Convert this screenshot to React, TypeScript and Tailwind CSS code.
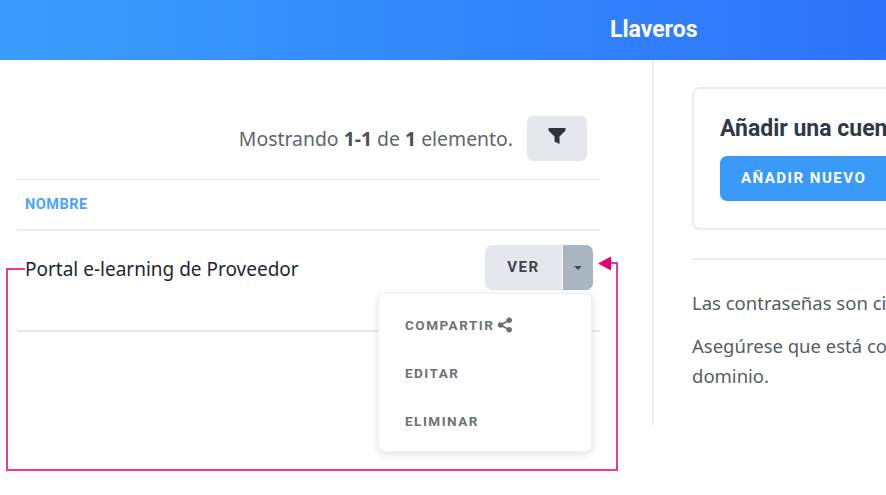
import React from 'react';

const body = "font-['Noto_Sans',sans-serif]";
const head = "font-['Roboto',sans-serif]";

function ShareIcon() {
  return (
    <svg className="w-[16px] h-[16px] text-[#6b7076]" viewBox="0 0 16 16" fill="currentColor">
      <circle cx="3.600" cy="8" r="2.800" />
      <circle cx="12.200" cy="3.200" r="2.700" />
      <circle cx="12.200" cy="12.800" r="2.700" />
      <path d="M3.600 8 12.200 3.200M3.600 8l8.600 4.800" stroke="currentColor" strokeWidth="1.600" fill="none" />
    </svg>
  );
}

function Arrows() {
  return (
    <svg className="absolute left-0 top-0 pointer-events-none" width="886" height="495" fill="none">
      <path d="M25 269H7V470H617V263H606" stroke="#e83e8c" strokeWidth="2" />
      <path d="M598 263.500 611 256.500V270.500Z" fill="#e6006e" />
    </svg>
  );
}

const menuItem = `${head} font-bold text-[13.500px] tracking-[1.500px] text-[#6c7278] uppercase`;

export default function App() {
  return (
    <div className={`${body} relative w-[886px] h-[495px] overflow-hidden bg-white`}>
      <header className="h-[60px] flex items-center pl-[610px] bg-gradient-to-r from-[#3b9dfb] to-[#2f72fb]">
        <h1 className={`${head} text-white font-bold text-[23px]`}>Llaveros</h1>
      </header>

      <div className="flex items-start">
        <section className="w-[654px] h-[365px] shrink-0 border-r-2 border-[#eceff2] pl-[17px] pr-[52px]">
          <div className="h-[120px] flex items-end justify-end pr-[13px] pb-[18px] border-b border-[#e4e8ec]">
            <span className="text-[19.400px] text-[#5f666d] mr-[14px] mb-[10px] leading-[24px] whitespace-nowrap">
              Mostrando <b className="font-bold text-[#4b5258]">1-1</b> de <b className="font-bold text-[#4b5258]">1</b> elemento.
            </span>
            <button className="w-[60px] h-[45px] rounded-[6px] bg-[#e4e8ec] flex items-center justify-center">
              <svg className="w-[18px] h-[18px] mb-[6px]" viewBox="0 0 18 18" fill="#2f3338">
                <path d="M0.500 1h17v2.500l-6 6v7.500l-5-2.500v-5l-6-6z" />
              </svg>
            </button>
          </div>

          <div className="h-[51px] flex items-center pl-[8px] border-b-2 border-[#e8ecf0]">
            <span className={`${head} font-bold text-[14.500px] tracking-[0.500px] text-[#4da3ff]`}>NOMBRE</span>
          </div>

          <div className="h-[101px] pl-[8px] pr-[7px] pt-[14px] flex justify-between items-start border-b-2 border-[#e4e8ec]">
            <span className="text-[19px] leading-[48px] text-[#1d2730]">Portal e-learning de Proveedor</span>
            <div className="flex h-[45px]">
              <button className={`${head} w-[77px] bg-[#e4e8ec] rounded-l-[7px] font-bold text-[15px] tracking-[1.500px] text-[#40464c]`}>VER</button>
              <button className="w-[30px] ml-[1px] bg-[#a9b5bf] rounded-r-[7px] flex items-center justify-center">
                <span className="w-0 h-0 border-x-[4px] border-x-transparent border-t-[4px] border-t-[#3f464d]" />
              </button>
            </div>
          </div>
        </section>

        <aside className="pl-[38px] pt-[27px] flex-1 min-w-0">
          <div className="w-[300px] h-[143px] border-2 border-[#e8ecf0] rounded-[8px] pl-[26px] pt-[26px]">
            <h2 className={`${head} font-bold text-[23px] leading-[28px] text-[#2e3a46] whitespace-nowrap`}>Añadir una cuenta</h2>
            <button className={`${head} mt-[13px] w-[190px] h-[45px] rounded-[7px] bg-[#3a9afa] text-white font-bold text-[15px] tracking-[1.500px] text-left pl-[21px] whitespace-nowrap`}>AÑADIR NUEVO</button>
          </div>
          <div className="mt-[28px] w-[300px] border-t-2 border-[#e8ecf0]" />
          <p className="mt-[30px] text-[18.500px] leading-[26px] text-[#565d64] whitespace-nowrap">Las contraseñas son cifradas</p>
          <p className="mt-[15px] text-[18.500px] leading-[30px] text-[#565d64] whitespace-nowrap">
            Asegúrese que está conectado<br />dominio.
          </p>
        </aside>
      </div>

      <div className="absolute left-[378px] top-[293px] w-[214px] h-[159px] bg-white rounded-[7px] border border-[#eef0f2] shadow-[0_2px_8px_rgba(0,0,0,0.12)] pl-[26px] pt-[7px] flex flex-col">
        <div className="h-[48px] flex items-center gap-[3px]">
          <span className={menuItem}>Compartir</span>
          <ShareIcon />
        </div>
        <div className="h-[48px] flex items-center"><span className={menuItem}>Editar</span></div>
        <div className="h-[48px] flex items-center"><span className={menuItem}>Eliminar</span></div>
      </div>

      <Arrows />
    </div>
  );
}
